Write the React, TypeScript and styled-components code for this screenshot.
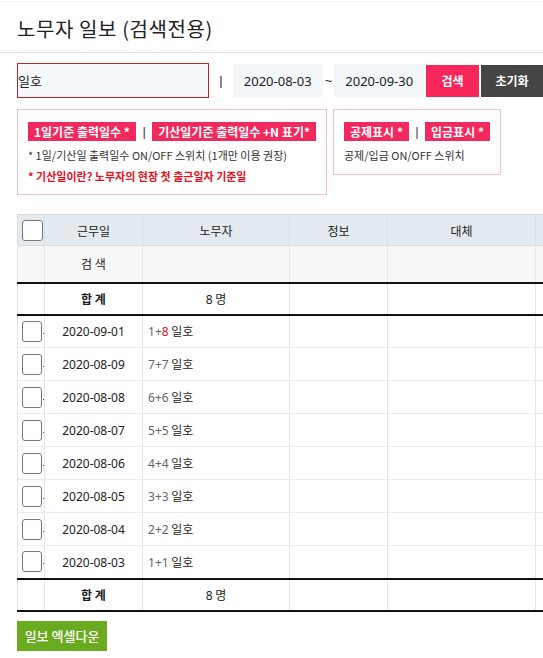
import styled, { createGlobalStyle } from "styled-components"

const GlobalStyle = createGlobalStyle`
  html, body {
    margin: 0;
    padding: 0;
    background: #fff;
    overflow: hidden;
  }
  body {
    font-family: "Noto Sans CJK KR", "Noto Sans", sans-serif;
    color: #222;
  }
`

const Page = styled.div`
  width: 543px;
  border-top: 1px solid #eee;
  margin-top: 1px;
`

const TitleBar = styled.div`
  height: 50px;
  padding: 0 17px;
  display: flex;
  align-items: center;
  border-bottom: 1px solid #e4e4e4;
`

const Title = styled.h1`
  margin: 2px 0 0 0;
  font-size: 20px;
  font-weight: 400;
  color: #222;
  letter-spacing: 0.6px;
`

const Body = styled.div`
  padding: 10px 0 0 17px;
`

const SearchBar = styled.div`
  display: flex;
  align-items: center;
  height: 35px;
`

const KeywordInput = styled.div`
  box-sizing: border-box;
  width: 193px;
  height: 35px;
  border: 1px solid #b3262a;
  background: #f3f7fa;
  font-size: 13px;
  display: flex;
  align-items: center;
`

const Divider = styled.span<{ $w: number }>`
  width: ${(p) => p.$w}px;
  text-align: center;
  font-family: "Liberation Sans", sans-serif;
  font-size: 13px;
  color: #222;
`

const DateBox = styled.div`
  width: 90px;
  height: 33px;
  background: #f2f6f9;
  font-family: "Noto Sans", sans-serif;
  font-size: 13px;
  display: flex;
  align-items: center;
  justify-content: center;
  color: #222;
`

const Button = styled.div<{ $bg: string; $w: number }>`
  width: ${(p) => p.$w}px;
  height: 32px;
  background: ${(p) => p.$bg};
  color: #fff;
  font-size: 12px;
  font-weight: 700;
  display: flex;
  align-items: center;
  justify-content: center;
  margin-left: 2px;
  flex-shrink: 0;
`

const InfoRow = styled.div`
  display: flex;
  gap: 6px;
  margin-top: 11px;
  align-items: flex-start;
`

const InfoBox = styled.div<{ $w: number; $h: number }>`
  box-sizing: border-box;
  width: ${(p) => p.$w}px;
  height: ${(p) => p.$h}px;
  border: 1px solid #f2c3cf;
  padding: 12px 10px 0 10px;
`

const TagLine = styled.div`
  display: flex;
  align-items: center;
  height: 19px;
`

const Tag = styled.span`
  background: #f2295c;
  color: #fff;
  font-size: 12px;
  font-weight: 700;
  height: 19px;
  line-height: 19px;
  padding: 0 6px;
  white-space: nowrap;
`

const TagSep = styled.span`
  width: 20px;
  text-align: center;
  font-family: "Liberation Sans", sans-serif;
  font-size: 13px;
  color: #444;
`

const Note = styled.div<{ $red?: boolean }>`
  font-size: 11px;
  margin-top: ${(p) => (p.$red ? 5 : 6)}px;
  color: ${(p) => (p.$red ? "#e8101e" : "#333")};
  font-weight: ${(p) => (p.$red ? 700 : 400)};
  white-space: nowrap;
`

const TableWrap = styled.div`
  margin-top: 19px;
  width: 620px;
`

const Table = styled.table`
  border-collapse: collapse;
  table-layout: fixed;
  width: 620px;
  font-size: 12px;
`

const Th = styled.th<{ $w: number }>`
  width: ${(p) => p.$w}px;
  height: 31px;
  box-sizing: border-box;
  background: #e4ebf0;
  border: 1px solid #d9e0e5;
  font-weight: 400;
  color: #222;
  padding: 0;
`

const SearchTr = styled.tr`
  height: 37px;
  background: #f7f7f7;
`

const TotalTr = styled.tr`
  height: 32px;
  border-top: 2px solid #111;
  border-bottom: 2px solid #111;
`

const DataTr = styled.tr`
  height: 33px;
`

const Td = styled.td<{ $left?: boolean; $dark?: boolean; $bold?: boolean }>`
  border-left: 1px solid ${(p) => (p.$dark ? "#999" : "#e6e6e6")};
  border-right: 1px solid #e6e6e6;
  border-bottom: 1px solid #ececec;
  text-align: ${(p) => (p.$left ? "left" : "center")};
  padding: ${(p) => (p.$left ? "0 0 0 5px" : "0")};
  font-weight: ${(p) => (p.$bold ? 700 : 400)};
  color: #222;
  white-space: nowrap;
`

const Num = styled.span`
  font-family: "Noto Sans", sans-serif;
`

const CheckCell = styled.div`
  display: flex;
  align-items: center;
  padding-left: 4px;
`

const Check = styled.span`
  box-sizing: border-box;
  width: 21px;
  height: 21px;
  border: 1px solid #777;
  border-radius: 3px;
  background: #fff;
`

const Dot = styled.span`
  width: 1px;
  height: 1px;
  background: #555;
  margin-left: 1px;
  margin-top: 4px;
`

const Count = styled.span<{ $red?: boolean }>`
  font-family: "Noto Sans", sans-serif;
  color: ${(p) => (p.$red ? "#e8101e" : "#666")};
`

const MiniInput = styled.span`
  display: inline-block;
  width: 20px;
  height: 20px;
  border: 1px solid #ccc;
  background: #fff;
  margin-left: 4px;
  vertical-align: middle;
`

const ExcelButton = styled.div`
  margin-top: 9px;
  width: 90px;
  height: 30px;
  background: #6aaa1f;
  color: #fff;
  font-size: 13px;
  font-weight: 500;
  display: flex;
  align-items: center;
  justify-content: center;
`

const rows = [
  { date: "2020-09-01", a: 1, b: 8, red: true },
  { date: "2020-08-09", a: 7, b: 7 },
  { date: "2020-08-08", a: 6, b: 6 },
  { date: "2020-08-07", a: 5, b: 5 },
  { date: "2020-08-06", a: 4, b: 4 },
  { date: "2020-08-05", a: 3, b: 3 },
  { date: "2020-08-04", a: 2, b: 2 },
  { date: "2020-08-03", a: 1, b: 1 }
]

const TotalRow = () => (
  <TotalTr>
    <Td></Td>
    <Td $bold>합 계</Td>
    <Td>
      <Num>8</Num> 명
    </Td>
    <Td></Td>
    <Td></Td>
    <Td></Td>
  </TotalTr>
)

export default function App() {
  return (
    <Page>
      <GlobalStyle />
      <TitleBar>
        <Title>노무자 일보 (검색전용)</Title>
      </TitleBar>
      <Body>
        <SearchBar>
          <KeywordInput>일호</KeywordInput>
          <Divider $w={24}>|</Divider>
          <DateBox>2020-08-03</DateBox>
          <Divider $w={12}>~</Divider>
          <DateBox>2020-09-30</DateBox>
          <Button $bg="#f7275c" $w={53}>
            검색
          </Button>
          <Button $bg="#454545" $w={62}>
            초기화
          </Button>
        </SearchBar>

        <InfoRow>
          <InfoBox $w={310} $h={86}>
            <TagLine>
              <Tag>1일기준 출력일수 *</Tag>
              <TagSep>|</TagSep>
              <Tag>기산일기준 출력일수 +N 표기*</Tag>
            </TagLine>
            <Note>* 1일/기산일 출력일수 ON/OFF 스위치 (1개만 이용 권장)</Note>
            <Note $red>* 기산일이란? 노무자의 현장 첫 출근일자 기준일</Note>
          </InfoBox>
          <InfoBox $w={168} $h={66}>
            <TagLine>
              <Tag>공제표시 *</Tag>
              <TagSep>|</TagSep>
              <Tag>입금표시 *</Tag>
            </TagLine>
            <Note>공제/입금 ON/OFF 스위치</Note>
          </InfoBox>
        </InfoRow>

        <TableWrap>
          <Table>
            <thead>
              <tr>
                <Th $w={27}>
                  <CheckCell>
                    <Check />
                  </CheckCell>
                </Th>
                <Th $w={98}>근무일</Th>
                <Th $w={147}>노무자</Th>
                <Th $w={98}>정보</Th>
                <Th $w={148}>대체</Th>
                <Th $w={102}></Th>
              </tr>
            </thead>
            <tbody>
              <SearchTr>
                <Td></Td>
                <Td>검 색</Td>
                <Td></Td>
                <Td></Td>
                <Td></Td>
                <Td $left>
                  <MiniInput />
                </Td>
              </SearchTr>
              <TotalRow />
              {rows.map((r) => (
                <DataTr key={r.date}>
                  <Td $left style={{ padding: 0 }}>
                    <CheckCell>
                      <Check />
                      <Dot />
                    </CheckCell>
                  </Td>
                  <Td>
                    <Num>{r.date}</Num>
                  </Td>
                  <Td $left>
                    <Count>{r.a}+</Count>
                    <Count $red={r.red}>{r.b}</Count> 일호
                  </Td>
                  <Td></Td>
                  <Td $dark></Td>
                  <Td></Td>
                </DataTr>
              ))}
              <TotalRow />
            </tbody>
          </Table>
        </TableWrap>

        <ExcelButton>일보 엑셀다운</ExcelButton>
      </Body>
    </Page>
  )
}
